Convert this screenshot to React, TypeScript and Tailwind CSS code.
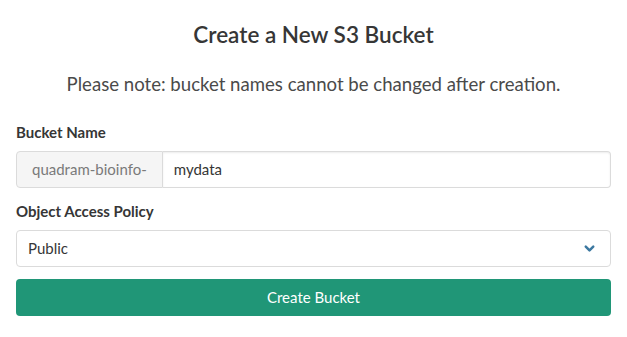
import { ChevronDown } from "lucide-react";

export default function App() {
  return (
    <div className="min-h-screen bg-white px-4 text-[#4a4a4a]" style={{ fontFamily: "Lato, 'Open Sans', sans-serif" }}>
      <h1 className="pt-[20px] text-center text-[22.5px] font-semibold leading-[30px] text-[#363636]">Create a New S3 Bucket</h1>
      <p className="mt-[23px] text-center text-[18.6px] leading-[23px] text-[#4a4a4a]">
        Please note: bucket names cannot be changed after creation.
      </p>

      <label className="mt-[26px] block text-[15px] font-bold leading-[20px] text-[#363636]">Bucket Name</label>
      <div className="mt-[9px] flex h-[37px] w-full">
        <span className="flex items-center rounded-l-[4px] border border-[#dbdbdb] bg-[#f5f5f5] px-[15px] text-[15px] text-[#7a7a7a]">
          quadram-bioinfo-
        </span>
        <input
          className="flex-1 rounded-r-[4px] border border-l-0 border-[#dbdbdb] px-[11px] text-[15px] text-[#363636] shadow-[inset_0_1px_2px_rgba(10,10,10,0.08)] outline-none"
          defaultValue="mydata"
        />
      </div>

      <label className="mt-[13px] block text-[15px] font-bold leading-[20px] text-[#363636]">Object Access Policy</label>
      <div className="relative mt-[9px] flex h-[37px] w-full items-center rounded-[4px] border border-[#dbdbdb] px-[11px] text-[15px] text-[#363636]">
        <span>Public</span>
        <ChevronDown className="absolute right-[13px] top-[10px] h-[15px] w-[15px] text-[#3c78a0]" strokeWidth={4} />
      </div>

      <button className="mt-[12px] flex h-[37px] w-full items-center justify-center rounded-[4px] bg-[#209677] text-[15px] text-white">
        Create Bucket
      </button>
    </div>
  );
}
